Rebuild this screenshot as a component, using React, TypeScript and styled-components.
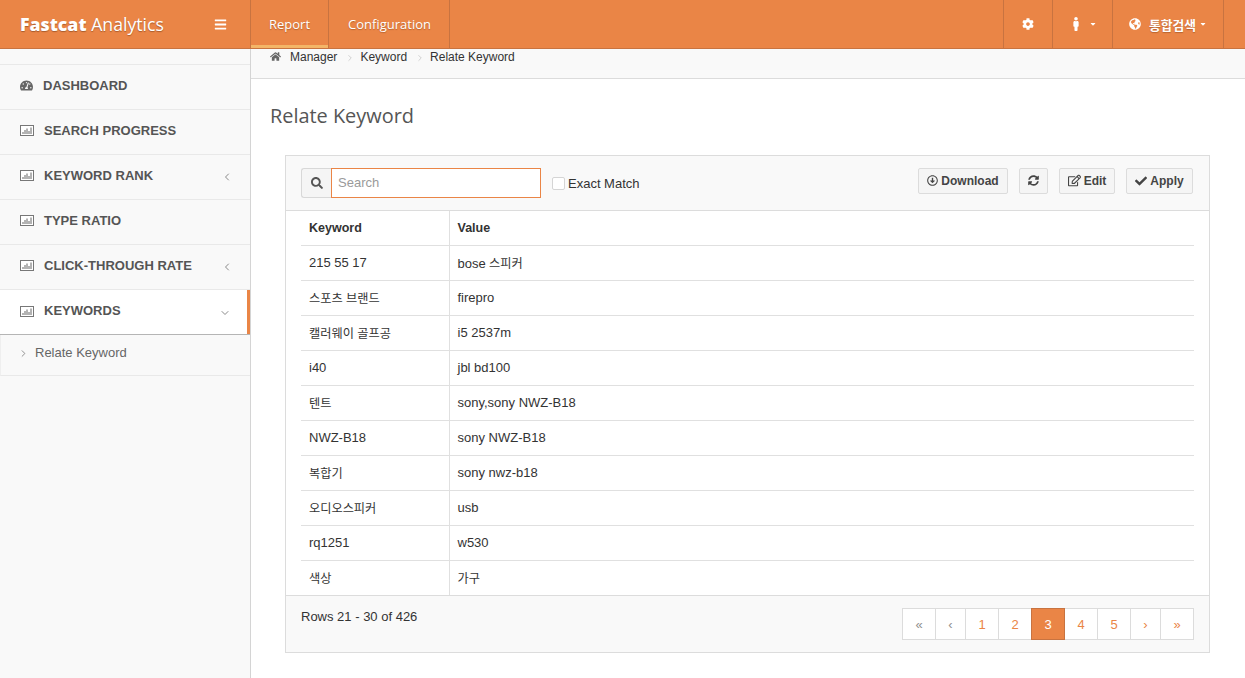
import React from "react";
import styled, { createGlobalStyle } from "styled-components";
import {
  FaBars, FaCog, FaMale, FaGlobeAmericas, FaHome, FaTachometerAlt, FaSearch, FaSyncAlt, FaCheck, FaRegEdit,
  FaRegArrowAltCircleDown, FaCaretDown,
} from "react-icons/fa";
import { LuChevronLeft, LuChevronDown, LuChevronRight } from "react-icons/lu";

const ORANGE = "#ea8546";
const LINE = "#c87340";
const SANS = `"Liberation Sans", "Noto Sans CJK KR", sans-serif`;
const OPEN = `"Open Sans", "Noto Sans CJK KR", sans-serif`;

const Global = createGlobalStyle`
  html, body { margin: 0; padding: 0; height: 100%; overflow: hidden; background: #fff; }
  body { font-family: ${SANS}; font-size: 13px; color: #333; }
  * { box-sizing: border-box; }
`;

const Page = styled.div`
  width: 1245px;
  height: 678px;
  display: flex;
  flex-direction: column;
  overflow: hidden;
`;

const Header = styled.header`
  height: 49px;
  flex: none;
  display: flex;
  background: ${ORANGE};
  border-bottom: 1px solid ${LINE};
  color: #fff;
`;

const Brand = styled.div`
  width: 250px;
  flex: none;
  display: flex;
  align-items: center;
  justify-content: space-between;
  padding: 0 23px 0 20px;
  font-family: ${OPEN};
  font-size: 17.7px;
  text-shadow: 0 1px 1px rgba(90, 40, 10, 0.45);
  b { font-weight: 800; }
  svg { font-size: 13px; }
`;

const NavTab = styled.div<{ $active?: boolean }>`
  height: 48px;
  display: flex;
  align-items: center;
  padding: ${(p) => (p.$active ? "0 18px" : "0 18px 0 19px")};
  border-left: 1px solid ${LINE};
  font-family: ${OPEN};
  font-size: 13px;
  text-shadow: 0 1px 1px rgba(90, 40, 10, 0.35);
  box-shadow: ${(p) => (p.$active ? "inset 0 -3px 0 #f4b567" : "none")};
`;

const NavEnd = styled.div`
  border-left: 1px solid ${LINE};
`;

const Spacer = styled.div`
  flex: 1;
`;

const UserCell = styled.div<{ $w: number; $last?: boolean }>`
  width: ${(p) => p.$w}px;
  height: 48px;
  display: flex;
  align-items: center;
  justify-content: center;
  gap: 5px;
  border-left: 1px solid ${LINE};
  border-right: ${(p) => (p.$last ? `1px solid ${LINE}` : "none")};
  font-family: "Noto Sans CJK KR", sans-serif;
  font-weight: 700;
  font-size: 12.8px;
  text-shadow: 0 1px 1px rgba(90, 40, 10, 0.35);
  svg { font-size: 12px; }
`;

const MaleIcon = styled(FaMale)`
  && { font-size: 14px; margin-right: 3px; }
`;

const Globe = styled(FaGlobeAmericas)`
  margin-right: 3px;
`;

const Caret = styled(FaCaretDown)`
  && { font-size: 8px; margin-left: -2px; }
`;

const HeaderEnd = styled.div`
  width: 21px;
  flex: none;
`;

const Body = styled.div`
  flex: 1;
  display: flex;
  min-height: 0;
`;

const Sidebar = styled.aside`
  width: 251px;
  flex: none;
  background: #f9f9f9;
  border-right: 1px solid #d4d4d4;
  padding-top: 15px;
`;

const MenuItem = styled.div<{ $active?: boolean }>`
  height: 45px;
  display: flex;
  align-items: center;
  padding: 0 17px 4px 20px;
  border-top: 1px solid #e9e9e9;
  background: ${(p) => (p.$active ? "#fff" : "transparent")};
  color: #555;
  font-weight: 700;
  font-size: 13px;
  ${(p) =>
    p.$active
      ? `border-bottom: 1px solid #b5b5b5; height: 46px; padding-bottom: 3px; padding-right: 19px; box-shadow: inset -3px 0 0 ${ORANGE};`
      : ""}
`;

const MenuIcon = styled.span<{ $w: number }>`
  width: ${(p) => p.$w}px;
  flex: none;
  display: inline-flex;
  color: #666;
  svg { display: block; }
`;

const MenuLabel = styled.span`
  flex: 1;
`;

const Arrow = styled.span`
  display: inline-flex;
  color: #8a8a8a;
  font-size: 12px;
  margin-top: 4px;
`;

const SubItem = styled.div`
  height: 41px;
  display: flex;
  align-items: center;
  gap: 6px;
  padding: 0 0 5px 17px;
  border-bottom: 1px solid #e9e9e9;
  border-left: 1px solid #efefef;
  color: #666;
  font-size: 13px;
  svg { color: #888; font-size: 11px; margin-top: 2px; }
`;

const Main = styled.main`
  flex: 1;
  min-width: 0;
  display: flex;
  flex-direction: column;
`;

const Crumbs = styled.div`
  height: 30px;
  flex: none;
  background: #f9f9f9;
  border-bottom: 1px solid #dcdcdc;
  display: flex;
  align-items: flex-start;
  padding-left: 19px;
  font-size: 12px;
  color: #333;
  line-height: 16px;
  svg.home { color: #666; font-size: 11px; margin: 2px 9px 0 0; }
  svg.sep { color: #c9c9c9; font-size: 10px; margin: 4px 5px 0 8px; }
`;

const Content = styled.div`
  padding: 0 35px 0 19px;
`;

const Title = styled.h1`
  margin: 23px 0 26px;
  height: 27px;
  line-height: 27px;
  font-family: ${OPEN};
  font-weight: 400;
  font-size: 19.9px;
  color: #555;
`;

const Panel = styled.section`
  margin-left: 15px;
  width: 925px;
  height: 498px;
  border: 1px solid #dcdcdc;
  display: flex;
  flex-direction: column;
`;

const Toolbar = styled.div`
  height: 55px;
  flex: none;
  background: #f9f9f9;
  border-bottom: 1px solid #dcdcdc;
  display: flex;
  align-items: center;
  padding: 0 16px 0 15px;
`;

const SearchAddon = styled.div`
  width: 30px;
  height: 30px;
  display: flex;
  align-items: center;
  justify-content: center;
  background: #f5f5f5;
  border: 1px solid #d8d8d8;
  border-right: none;
  border-radius: 3px 0 0 3px;
  color: #555;
  font-size: 12px;
`;

const SearchInput = styled.input`
  width: 210px;
  height: 30px;
  border: 1px solid ${ORANGE};
  padding: 0 6px 2px;
  font-family: ${SANS};
  font-size: 13px;
  outline: none;
  background: #fff;
  &::placeholder { color: #9a9a9a; opacity: 1; }
`;

const Exact = styled.label`
  display: flex;
  align-items: center;
  gap: 3px;
  margin-left: 11px;
  font-size: 13px;
  color: #333;
`;

const Check = styled.span`
  width: 13px;
  height: 13px;
  background: #fff;
  border: 1px solid #d5d5d5;
  border-radius: 2px;
`;

const Tool = styled.div<{ $w: number; $gap: number; $icon: number }>`
  width: ${(p) => p.$w}px;
  margin-left: ${(p) => p.$gap}px;
  height: 26px;
  margin-top: -5px;
  display: flex;
  align-items: center;
  justify-content: center;
  gap: 3px;
  background: #f5f5f5;
  border: 1px solid #dcdcdc;
  border-radius: 2px;
  color: #444;
  font-weight: 700;
  font-size: 12px;
  svg { font-size: ${(p) => p.$icon}px; }
`;

const TableWrap = styled.div`
  height: 385px;
  flex: none;
  padding: 0 15px;
  border-bottom: 1px solid #dcdcdc;
`;

const Table = styled.table`
  width: 893px;
  border-collapse: collapse;
  table-layout: fixed;
  font-size: 13px;
  color: #333;
  thead tr { height: 34px; }
  tbody tr { height: 35px; }
  tr:last-child td { border-bottom: none; }
  th, td {
    padding: 0 8px;
    text-align: left;
    border-bottom: 1px solid #e0e0e0;
    font-family: ${SANS};
  }
  th { font-weight: 700; font-size: 12.5px; }
  th:first-child, td:first-child { width: 148px; border-right: 1px solid #e0e0e0; }
`;

const Hangul = styled.span`
  font-size: 12.2px;
`;

const Footer = styled.div`
  flex: 1;
  background: #f9f9f9;
  display: flex;
  justify-content: space-between;
  align-items: flex-start;
  padding: 12px 15px 0;
  font-size: 13px;
  color: #333;
`;

const Rows = styled.span`
  line-height: 16px;
  margin-top: 1px;
`;

const Pager = styled.div`
  display: flex;
  height: 32px;
`;

const PageBtn = styled.div<{ $w: number; $active?: boolean; $muted?: boolean }>`
  width: ${(p) => p.$w}px;
  display: flex;
  align-items: center;
  justify-content: center;
  margin-left: -1px;
  background: ${(p) => (p.$active ? ORANGE : "#fff")};
  border: 1px solid ${(p) => (p.$active ? LINE : "#dcdcdc")};
  color: ${(p) => (p.$active ? "#fff" : p.$muted ? "#8f8f8f" : ORANGE)};
  font-size: 13px;
  position: ${(p) => (p.$active ? "relative" : "static")};
`;

const BarChart = () => (
  <svg width="14" height="12" viewBox="0 0 14 12" fill="none">
    <rect x="0.5" y="1.5" width="13" height="10" stroke="#777" fill="#fff" />
    <path d="M3 10V8M5 10V6M7 10V4.5M9 10V7M11 10V3.5" stroke="#666" strokeWidth="1" />
  </svg>
);

const Cell = ({ text }: { text: string }) => (
  <>
    {text.split(/([\uac00-\ud7a3 ]*[\uac00-\ud7a3]+)/).map((part, i) =>
      i % 2 === 1 ? <Hangul key={i}>{part}</Hangul> : part
    )}
  </>
);

const menu: { label: string; arrow?: "left" | "down"; active?: boolean; dash?: boolean }[] = [
  { label: "DASHBOARD", dash: true },
  { label: "SEARCH PROGRESS" },
  { label: "KEYWORD RANK", arrow: "left" },
  { label: "TYPE RATIO" },
  { label: "CLICK-THROUGH RATE", arrow: "left" },
  { label: "KEYWORDS", arrow: "down", active: true },
];

const rows = [
  ["215 55 17", "bose 스피커"],
  ["스포츠 브랜드", "firepro"],
  ["캘러웨이 골프공", "i5 2537m"],
  ["i40", "jbl bd100"],
  ["텐트", "sony,sony NWZ-B18"],
  ["NWZ-B18", "sony NWZ-B18"],
  ["복합기", "sony nwz-b18"],
  ["오디오스피커", "usb"],
  ["rq1251", "w530"],
  ["색상", "가구"],
];

const pages: { t: string; w: number; active?: boolean; muted?: boolean }[] = [
  { t: "«", w: 34, muted: true },
  { t: "‹", w: 31, muted: true },
  { t: "1", w: 34 },
  { t: "2", w: 34 },
  { t: "3", w: 34, active: true },
  { t: "4", w: 34 },
  { t: "5", w: 34 },
  { t: "›", w: 31 },
  { t: "»", w: 34 },
];

export default function App() {
  return (
    <Page>
      <Global />
      <Header>
        <Brand>
          <span><b>Fastcat</b> Analytics</span>
          <FaBars />
        </Brand>
        <NavTab $active>Report</NavTab>
        <NavTab>Configuration</NavTab>
        <NavEnd />
        <Spacer />
        <UserCell $w={49}><FaCog /></UserCell>
        <UserCell $w={60}><MaleIcon /><Caret /></UserCell>
        <UserCell $w={112} $last><Globe />통합검색<Caret /></UserCell>
        <HeaderEnd />
      </Header>
      <Body>
        <Sidebar>
          {menu.map((m) => (
            <MenuItem key={m.label} $active={m.active}>
              <MenuIcon $w={m.dash ? 23 : 24}>{m.dash ? <FaTachometerAlt size={13} /> : <BarChart />}</MenuIcon>
              <MenuLabel>{m.label}</MenuLabel>
              {m.arrow === "left" && <Arrow><LuChevronLeft /></Arrow>}
              {m.arrow === "down" && <Arrow><LuChevronDown /></Arrow>}
            </MenuItem>
          ))}
          <SubItem><LuChevronRight />Relate Keyword</SubItem>
        </Sidebar>
        <Main>
          <Crumbs>
            <FaHome className="home" />
            Manager<LuChevronRight className="sep" />Keyword<LuChevronRight className="sep" />Relate Keyword
          </Crumbs>
          <Content>
            <Title>Relate Keyword</Title>
            <Panel>
              <Toolbar>
                <SearchAddon><FaSearch /></SearchAddon>
                <SearchInput placeholder="Search" readOnly />
                <Exact><Check />Exact Match</Exact>
                <Spacer />
                <Tool $w={90} $gap={0} $icon={11}><FaRegArrowAltCircleDown />Download</Tool>
                <Tool $w={29} $gap={11} $icon={11}><FaSyncAlt /></Tool>
                <Tool $w={56} $gap={11} $icon={13}><FaRegEdit />Edit</Tool>
                <Tool $w={67} $gap={11} $icon={12}><FaCheck />Apply</Tool>
              </Toolbar>
              <TableWrap>
                <Table>
                  <thead>
                    <tr><th>Keyword</th><th>Value</th></tr>
                  </thead>
                  <tbody>
                    {rows.map((r) => (
                      <tr key={r[0]}><td><Cell text={r[0]} /></td><td><Cell text={r[1]} /></td></tr>
                    ))}
                  </tbody>
                </Table>
              </TableWrap>
              <Footer>
                <Rows>Rows 21 - 30 of 426</Rows>
                <Pager>
                  {pages.map((p) => (
                    <PageBtn key={p.t} $w={p.w} $active={p.active} $muted={p.muted}>{p.t}</PageBtn>
                  ))}
                </Pager>
              </Footer>
            </Panel>
          </Content>
        </Main>
      </Body>
    </Page>
  );
}
